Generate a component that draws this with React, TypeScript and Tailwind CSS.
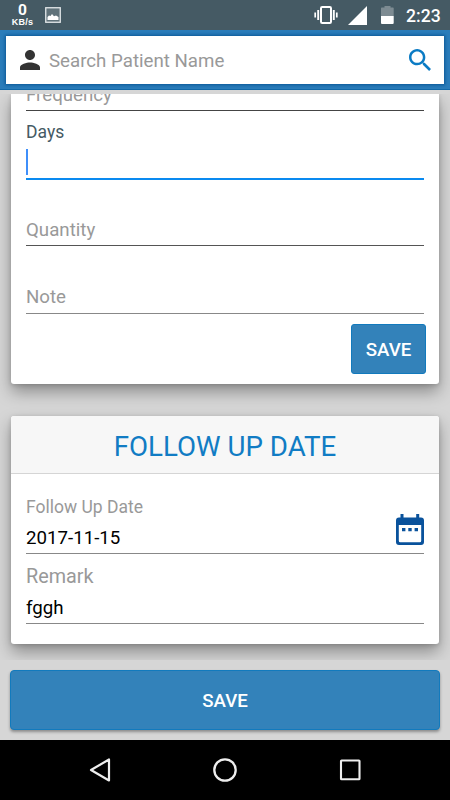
import type { ReactNode } from "react";
import { clsx } from "clsx";

function StatusBar() {
  return (
    <div className="flex h-[30px] shrink-0 items-center bg-[#455a64] text-white">
      <div className="ml-[11px] flex w-[23px] flex-col items-center font-bold">
        <span className="text-[15.500px] leading-[14px]">0</span>
        <span className="font-['Liberation_Sans',sans-serif] text-[9px] leading-[10px] tracking-[0.300px]">KB/s</span>
      </div>
      <svg className="ml-[11px]" width="16" height="16" viewBox="0 0 16 16">
        <rect x="0.75" y="0.75" width="14.5" height="14.5" fill="#60727a" stroke="#e4e8ea" strokeWidth="1.3" />
        <path d="M2.5 13V10l1.500-1.500 1.500.5 1.500-2 2 2.200 2-.7 2.500 1.500v3z" fill="#fff" />
      </svg>
      <div className="flex-1" />
      <svg width="24" height="18" viewBox="0 0 24 18" fill="none" stroke="#fff">
        <rect x="7" y="1" width="10" height="16" rx="1.2" strokeWidth="2" />
        <path d="M4.2 4v10M19.8 4v10" strokeWidth="1.9" />
        <path d="M1.2 6.500v5M22.8 6.500v5" strokeWidth="1.7" />
      </svg>
      <svg className="ml-[10px]" width="19" height="19" viewBox="0 0 19 19">
        <path d="M19 0v19H0z" fill="#fff" />
      </svg>
      <svg className="ml-[14px]" width="13" height="18" viewBox="0 0 13 18">
        <path d="M3.500 0h6v1.500H12q.7 0 .7.7V10H0V2.200q0-.7.7-.7h2.800z" fill="#7d8b92" />
        <path d="M0 10h12.700v7q0 1-1 1H1q-1 0-1-1z" fill="#fff" />
      </svg>
      <span className="ml-[12px] w-[44px] pt-px text-[17.600px] font-medium leading-[30px]">2:23</span>
    </div>
  );
}

function SearchBar() {
  return (
    <div className="h-[60px] shrink-0 border-b border-[#1268a8] bg-[#2a7cba] px-[6px] pt-[6px]">
      <div className="flex h-[48px] items-center bg-white pl-[14px] pr-[13px] shadow-[0_0_3px_1px_#0b5795]">
        <svg width="20" height="20" viewBox="4 4 16 16" fill="#333">
          <path d="M12 12c2.210 0 4-1.790 4-4s-1.790-4-4-4-4 1.790-4 4 1.790 4 4 4zm0 2c-2.670 0-8 1.340-8 4v2h16v-2c0-2.660-5.330-4-8-4z" />
        </svg>
        <span className="ml-[9px] flex-1 pt-[2px] text-[18.700px] text-[#999]">Search Patient Name</span>
        <svg width="22" height="22" viewBox="3 3 17.500 17.500" fill="#0b7bc4">
          <path d="M15.500 14h-.79l-.28-.27C15.410 12.590 16 11.110 16 9.500 16 5.910 13.090 3 9.500 3S3 5.910 3 9.500 5.910 16 9.500 16c1.610 0 3.090-.59 4.230-1.570l.27.28v.79l5 4.990L20.490 19l-4.990-5zm-6 0C7.010 14 5 11.990 5 9.500S7.010 5 9.500 5 14 7.010 14 9.500 11.990 14 9.500 14z" />
        </svg>
      </div>
    </div>
  );
}

function Card({ className, children }: { className?: string; children: ReactNode }) {
  return (
    <section
      className={clsx(
        "flex flex-col rounded-[3px] bg-white shadow-[0_8px_16px_rgba(0,0,0,0.34),0_1px_4px_rgba(0,0,0,0.16)]",
        className,
      )}
    >
      {children}
    </section>
  );
}

function CalendarIcon() {
  return (
    <svg width="28" height="32" viewBox="0 0 28 32">
      <path
        d="M4.500 0h3v3.500h12.700V0h3v3.500H25q3 0 3 3V28q0 3-3 3H3q-3 0-3-3V6.500q0-3 3-3h1.500zM2.800 11v15.800q0 1.500 1.500 1.500h19.400q1.500 0 1.500-1.500V11z"
        fill="#09529c"
        fillRule="evenodd"
      />
      <path d="M6 14h3.400v3.300H6zM12.300 14h3.400v3.300h-3.400zM18.600 14H22v3.300h-3.400z" fill="#09529c" />
    </svg>
  );
}

function NavBar() {
  return (
    <div className="flex h-[60px] shrink-0 items-center justify-between bg-black px-[88px]">
      <svg width="24" height="26" viewBox="0 0 24 26" fill="none" stroke="#eee" strokeWidth="2.200" strokeLinejoin="round">
        <path d="M21 2.500v21L3 13z" />
      </svg>
      <svg width="26" height="26" viewBox="0 0 26 26" fill="none" stroke="#eee" strokeWidth="2.300">
        <circle cx="13" cy="13" r="10.700" />
      </svg>
      <svg width="24" height="26" viewBox="0 0 24 26" fill="none" stroke="#eee" strokeWidth="2.100">
        <rect x="3" y="3.500" width="18.500" height="18.800" rx="0.600" />
      </svg>
    </div>
  );
}

export default function App() {
  return (
    <div className="flex h-[800px] w-[450px] flex-col overflow-hidden bg-[#d6d6d6] font-['Roboto',sans-serif]">
      <StatusBar />
      <SearchBar />

      <main className="mt-[4px] h-[566px] shrink-0 overflow-hidden px-[11px]">
        <Card className="h-[290px] rounded-t-none px-[15px]">
          {/* this field is scrolled partly under the search bar */}
          <div className="flex h-[17px] items-end overflow-hidden border-b border-[#444]">
            <span className="mb-[4px] text-[18.700px] leading-[22px] text-[#999]">Frequency</span>
          </div>
          <label className="mt-[11px] text-[17.500px] leading-[20px] text-[#455a64]">Days</label>
          <div className="flex h-[38px] items-end border-b-2 border-[#0a8af0] pb-[3px]">
            <span className="h-[26px] w-[2px] bg-[#3f8ffa]" />
          </div>
          <div className="flex h-[66px] items-end border-b border-[#555] pb-[4px] text-[18.700px] leading-[22px] text-[#999]">
            Quantity
          </div>
          <div className="flex h-[68px] items-end border-b border-[#888] pb-[5px] text-[18.700px] leading-[22px] text-[#999]">
            Note
          </div>
          <button className="-mr-[2px] mt-[10px] h-[50px] w-[75px] self-end rounded-[3px] border border-[#127abd] bg-[#3382ba] pt-[2px] text-[18.700px] font-medium text-white">
            SAVE
          </button>
        </Card>

        <Card className="mt-[32px] h-[228px]">
          <h2 className="h-[58px] rounded-t-[3px] border-b border-[#d5d5d5] bg-[#f7f7f7] text-center text-[27.700px] leading-[61px] text-[#117cc4]">
            FOLLOW UP DATE
          </h2>
          <div className="flex flex-col px-[15px]">
            <div className="flex h-[80px] items-end justify-between border-b border-[#888]">
              <div className="flex flex-col">
                <span className="text-[17.500px] leading-[20px] text-[#999]">Follow Up Date</span>
                <span className="mb-[4px] mt-[10px] text-[18.700px] leading-[22px] text-black">2017-11-15</span>
              </div>
              <div className="mb-[7px]">
                <CalendarIcon />
              </div>
            </div>
            <div className="flex h-[70px] flex-col justify-end border-b border-[#888]">
              <span className="text-[19.800px] leading-[22px] text-[#999]">Remark</span>
              <span className="mb-[4px] mt-[9px] text-[18.700px] leading-[22px] text-black">fggh</span>
            </div>
          </div>
        </Card>
      </main>

      <footer className="h-[80px] shrink-0 bg-[#d6d6d6] px-[10px] pt-[10px]">
        <button className="h-[60px] w-full rounded-[4px] border border-[#127abd] bg-[#3382ba] pt-[2px] text-[18.700px] font-medium text-white shadow-[0_2px_3px_rgba(0,0,0,0.35)]">
          SAVE
        </button>
      </footer>
      <NavBar />
    </div>
  );
}
